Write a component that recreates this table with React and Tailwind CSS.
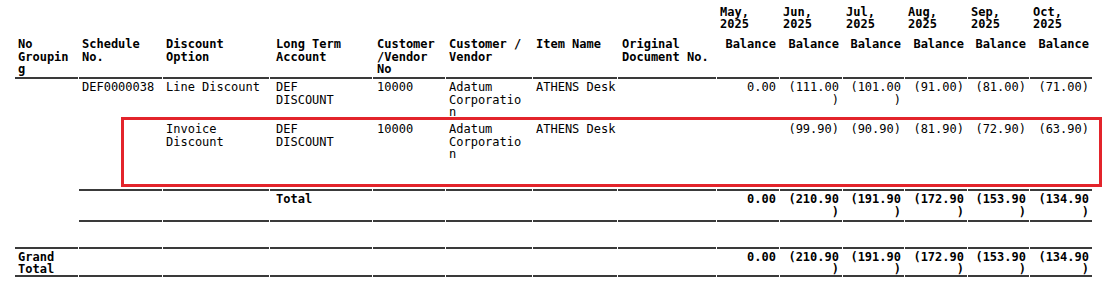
import React from "react";

// Column layout of the report grid (cell widths, 1px gaps between cells)
const GRID =
  "grid grid-cols-[63px_83px_106px_102px_72px_86px_84px_98px_62px_62px_61px_62px_61px_62px] gap-x-px";

const PAD = [
  "pl-[3px]",
  "pl-[3px]",
  "pl-[3px]",
  "pl-[6px]",
  "pl-[4px]",
  "pl-[3px]",
  "pl-[3px]",
  "pl-[4px]",
  "pr-[3px] text-right",
  "pr-[3px] text-right",
  "pr-[3px] text-right",
  "pr-[3px] text-right",
  "pr-[3px] text-right",
  "pr-[3px] text-right",
];

const months = ["May,", "Jun,", "Jul,", "Aug,", "Sep,", "Oct,"];

const headers = [
  ["No", "Groupin", "g"],
  ["Schedule", "No."],
  ["Discount", "Option"],
  ["Long Term", "Account"],
  ["Customer", "/Vendor", "No"],
  ["Customer /", "Vendor"],
  ["Item Name"],
  ["Original", "Document No."],
  ["Balance"],
  ["Balance"],
  ["Balance"],
  ["Balance"],
  ["Balance"],
  ["Balance"],
];

const lineOne = [
  [],
  ["DEF0000038"],
  ["Line Discount"],
  ["DEF", "DISCOUNT"],
  ["10000"],
  ["Adatum", "Corporatio", "n"],
  ["ATHENS Desk"],
  [],
  ["0.00"],
  ["(111.00", ")"],
  ["(101.00", ")"],
  ["(91.00)"],
  ["(81.00)"],
  ["(71.00)"],
];

const lineTwo = [
  [],
  [],
  ["Invoice", "Discount"],
  ["DEF", "DISCOUNT"],
  ["10000"],
  ["Adatum", "Corporatio", "n"],
  ["ATHENS Desk"],
  [],
  [],
  ["(99.90)"],
  ["(90.90)"],
  ["(81.90)"],
  ["(72.90)"],
  ["(63.90)"],
];

const totals = [
  ["0.00"],
  ["(210.90", ")"],
  ["(191.90", ")"],
  ["(172.90", ")"],
  ["(153.90", ")"],
  ["(134.90", ")"],
];

function Lines({ lines }) {
  return lines.map((l, k) => (
    <div key={k} className="whitespace-pre">
      {l}
    </div>
  ));
}

export default function App() {
  const subtotal = [[], [], [], ["Total"], [], [], [], [], ...totals];
  const grand = [["Grand", "Total"], [], [], [], [], [], [], [], ...totals];

  return (
    <div className="w-[1119px] h-[292px] bg-white text-black font-['DejaVu_Sans_Mono',monospace] text-[12px] leading-[12.5px] overflow-hidden">
      <div className="relative pl-[15px]">
        {/* month captions */}
        <div className={`${GRID} h-[38px] font-bold leading-[12px]`}>
          {headers.map((_, i) => (
            <div key={i} className="pl-[3px] pt-[6px]">
              {i >= 8 && <Lines lines={[months[i - 8], "2025"]} />}
            </div>
          ))}
        </div>

        {/* column headers */}
        <div className={`${GRID} h-[41px] font-bold`}>
          {headers.map((h, i) => (
            <div key={i} className={`${PAD[i]} border-b-2 border-[#3a3a3a]`}>
              <Lines lines={h} />
            </div>
          ))}
        </div>

        {/* detail lines */}
        <div className={`${GRID} h-[42px]`}>
          {lineOne.map((c, i) => (
            <div key={i} className={`${PAD[i]} pt-[2px]`}>
              <Lines lines={c} />
            </div>
          ))}
        </div>
        <div className={`${GRID} h-[68px]`}>
          {lineTwo.map((c, i) => (
            <div key={i} className={`${PAD[i]} pt-[2px]`}>
              <Lines lines={c} />
            </div>
          ))}
        </div>

        {/* group total */}
        <div className={`${GRID} h-[33px] font-bold`}>
          {subtotal.map((c, i) => (
            <div
              key={i}
              className={`${PAD[i]} pt-[2px] ${i > 0 ? "border-y-2 border-[#3a3a3a]" : ""}`}
            >
              <Lines lines={c} />
            </div>
          ))}
        </div>

        <div className="h-[25px]" />

        {/* grand total */}
        <div className={`${GRID} h-[30px] font-bold leading-[12px]`}>
          {grand.map((c, i) => (
            <div key={i} className={`${PAD[i]} pt-[2px] border-y-2 border-[#3a3a3a]`}>
              <Lines lines={c} />
            </div>
          ))}
        </div>

        {/* highlight annotation */}
        <div className="absolute left-[121px] top-[117px] w-[981px] h-[70px] border-[3px] border-[#e3242b]" />
      </div>
    </div>
  );
}
